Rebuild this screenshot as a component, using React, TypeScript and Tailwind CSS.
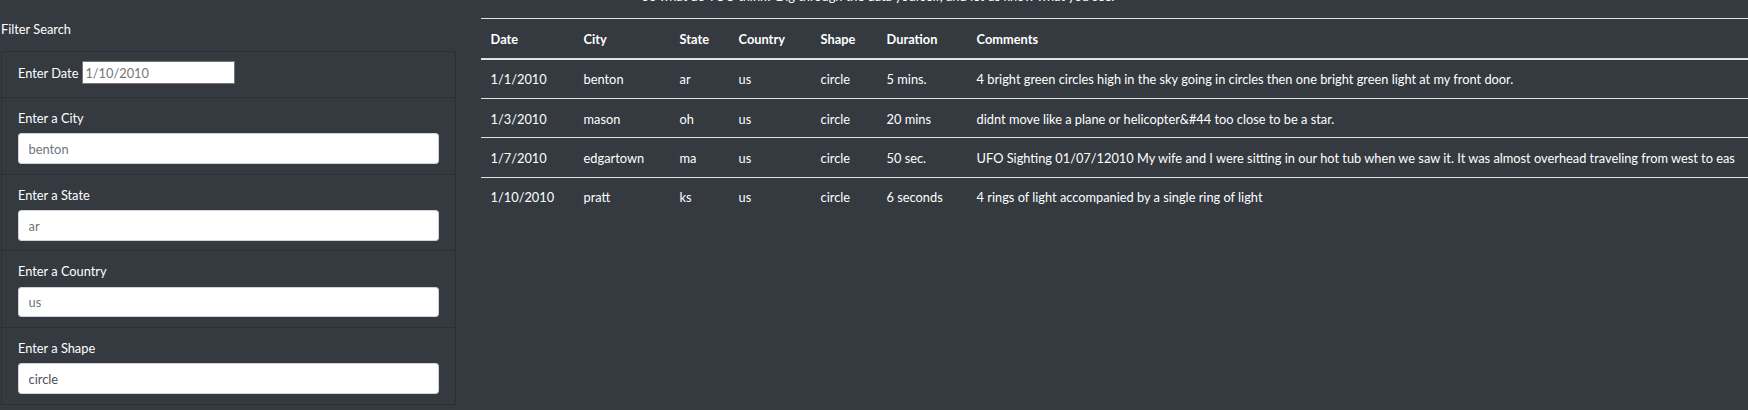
import React from "react";

type Sighting = {
  date: string;
  city: string;
  state: string;
  country: string;
  shape: string;
  duration: string;
  comments: string;
};

const sightings: Sighting[] = [
  {
    date: "1/1/2010",
    city: "benton",
    state: "ar",
    country: "us",
    shape: "circle",
    duration: "5 mins.",
    comments:
      "4 bright green circles high in the sky going in circles then one bright green light at my front door.",
  },
  {
    date: "1/3/2010",
    city: "mason",
    state: "oh",
    country: "us",
    shape: "circle",
    duration: "20 mins",
    comments: "didnt move like a plane or helicopter&#44 too close to be a star.",
  },
  {
    date: "1/7/2010",
    city: "edgartown",
    state: "ma",
    country: "us",
    shape: "circle",
    duration: "50 sec.",
    comments:
      "UFO Sighting 01/07/12010 My wife and I were sitting in our hot tub when we saw it. It was almost overhead traveling from west to eas",
  },
  {
    date: "1/10/2010",
    city: "pratt",
    state: "ks",
    country: "us",
    shape: "circle",
    duration: "6 seconds",
    comments: "4 rings of light accompanied by a single ring of light",
  },
];

const filters = [
  { label: "Enter a City", placeholder: "benton" },
  { label: "Enter a State", placeholder: "ar" },
  { label: "Enter a Country", placeholder: "us" },
  { label: "Enter a Shape", placeholder: "circle", dark: true },
];

const columns = ["Date", "City", "State", "Country", "Shape", "Duration", "Comments"];

function FilterPanel() {
  return (
    <aside className="ml-px w-[455px] shrink-0 pt-[20px]">
      <p className="mb-[12px] leading-[19.2px]">Filter Search</p>
      <ul className="rounded-t-[3.2px] border-x border-t border-[#2b3036]">
        <li className="border-b border-[#2b3036] px-4 pt-[9px] pb-[13px]">
          <div className="flex items-center gap-[4px]">
            <label className="pt-[2px] leading-[19.2px]">Enter Date</label>
            <input
              type="text"
              placeholder="1/10/2010"
              className="h-[23px] w-[153px] border border-[#767676] bg-white px-[2px] pt-[1px] leading-[19.2px] text-black placeholder:text-[#757575] outline-none"
            />
          </div>
        </li>
        {filters.map((f) => (
          <li
            key={f.label}
            className="border-b border-[#2b3036] px-4 py-[9.6px]"
          >
            <label className="mb-[5px] block pt-[1.4px] leading-[19.2px]">{f.label}</label>
            <input
              type="text"
              placeholder={f.placeholder}
              className={
                f.dark
                  ? "block h-[30.8px] w-full rounded-[3.2px] border border-[#ced4da] bg-white px-[9.6px] pt-[1px] leading-[19.2px] text-[#495057] placeholder:text-[#495057] outline-none"
                  : "block h-[30.8px] w-full rounded-[3.2px] border border-[#ced4da] bg-white px-[9.6px] pt-[1px] leading-[19.2px] text-[#495057] placeholder:text-[#6c757d] outline-none"
              }
            />
          </li>
        ))}
      </ul>
    </aside>
  );
}

function SightingsTable() {
  return (
    <main className="ml-[25px] min-w-0 flex-1">
      <p className="-mt-[13px] mb-[12px] whitespace-nowrap pl-[161px] leading-[19.2px]">
        So what do YOU think? Dig through the data yourself, and let us know what you see.
      </p>
      <table className="w-full table-fixed border-collapse">
        <colgroup>
          <col className="w-[93px]" />
          <col className="w-[96px]" />
          <col className="w-[59px]" />
          <col className="w-[82px]" />
          <col className="w-[66px]" />
          <col className="w-[90px]" />
          <col />
        </colgroup>
        <thead>
          <tr>
            {columns.map((c) => (
              <th
                key={c}
                className="border-t border-b-2 border-[#dee2e6] px-[9.6px] pt-[10.6px] pb-[8.6px] text-left align-bottom leading-[19.2px] font-bold"
              >
                {c}
              </th>
            ))}
          </tr>
        </thead>
        <tbody>
          {sightings.map((s) => (
            <tr key={s.date}>
              {[s.date, s.city, s.state, s.country, s.shape, s.duration, s.comments].map(
                (v, i) => (
                  <td
                    key={i}
                    className="whitespace-nowrap border-t border-[#dee2e6] px-[9.6px] pt-[10.6px] pb-[8.6px] align-top leading-[19.2px]"
                  >
                    {v}
                  </td>
                )
              )}
            </tr>
          ))}
        </tbody>
      </table>
    </main>
  );
}

export default function App() {
  return (
    <div className="h-[410px] w-full overflow-hidden bg-[#343a40] font-['Lato',sans-serif] text-[12.8px] text-white">
      <div className="flex items-start">
        <FilterPanel />
        <SightingsTable />
      </div>
    </div>
  );
}
